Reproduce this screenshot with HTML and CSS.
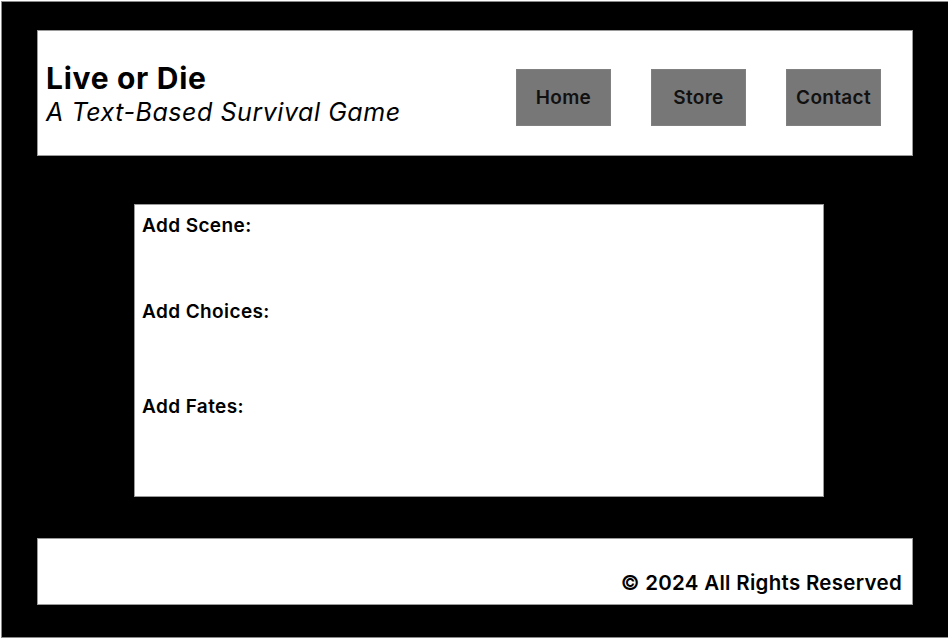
FILE: index.html
```html
<!DOCTYPE html>
<html lang="en">
<head>
<meta charset="utf-8">
<title>Live or Die</title>
<link rel="stylesheet" href="styles.css">
</head>
<body>
<div class="page">
  <header class="site-header">
    <div class="brand">
      <div class="brand-title">Live or Die</div>
      <div class="brand-sub">A Text-Based Survival Game</div>
    </div>
    <nav class="nav">
      <a class="nav-btn" href="#">Home</a>
      <a class="nav-btn" href="#">Store</a>
      <a class="nav-btn" href="#">Contact</a>
    </nav>
  </header>
  <main class="editor">
    <div class="field field-scene">Add Scene:</div>
    <div class="field field-choices">Add Choices:</div>
    <div class="field field-fates">Add Fates:</div>
  </main>
  <footer class="site-footer">© 2024 All Rights Reserved</footer>
</div>
</body>
</html>
```
FILE: styles.css
```css
* { box-sizing: border-box; }
html, body { margin: 0; padding: 0; background: #fff; overflow: hidden; }
body { font-family: Inter, "Noto Sans", sans-serif; color: #000; }

.page {
  margin: 1px 0 0 1px;
  height: 637px;
  background: #000;
  border: 1px solid #8a8a8a;
  border-right: none;
  padding: 28px 0 0 35px;
}

.site-header {
  width: 876px;
  height: 126px;
  background: #fff;
  border: 1px solid #9a9a9a;
  display: flex;
  align-items: flex-start;
  padding: 0 31px 0 8px;
}

.brand { margin-top: 31px; }
.brand-title {
  font-size: 30px;
  font-weight: 700;
  line-height: 32px;
  letter-spacing: 0.7px;
}
.brand-sub {
  margin-top: 4px;
  font-size: 25px;
  font-style: italic;
  line-height: 29px;
  letter-spacing: 0.55px;
}

.nav {
  margin-left: auto;
  margin-top: 38px;
  display: flex;
  gap: 40px;
}
.nav-btn {
  width: 95px;
  height: 57px;
  background: #777;
  color: #111;
  text-decoration: none;
  font-size: 19px;
  font-weight: 600;
  letter-spacing: 0.3px;
  display: flex;
  align-items: center;
  justify-content: center;
  border: 1px solid #808080;
}

.editor {
  margin: 48px 0 0 97px;
  width: 690px;
  height: 293px;
  background: #fff;
  border: 1px solid #9a9a9a;
  padding: 9px 7px 0;
  display: flex;
  flex-direction: column;
}
.field {
  font-size: 19px;
  font-weight: 600;
  line-height: 23px;
  letter-spacing: 0.4px;
}
.field-choices { margin-top: 63px; }
.field-fates { margin-top: 72px; }

.site-footer {
  margin-top: 41px;
  width: 876px;
  height: 67px;
  background: #fff;
  border: 1px solid #9a9a9a;
  padding: 31px 10px 0 0;
  text-align: right;
  font-size: 20.5px;
  font-weight: 600;
  line-height: 25px;
  letter-spacing: 0.3px;
}
```
